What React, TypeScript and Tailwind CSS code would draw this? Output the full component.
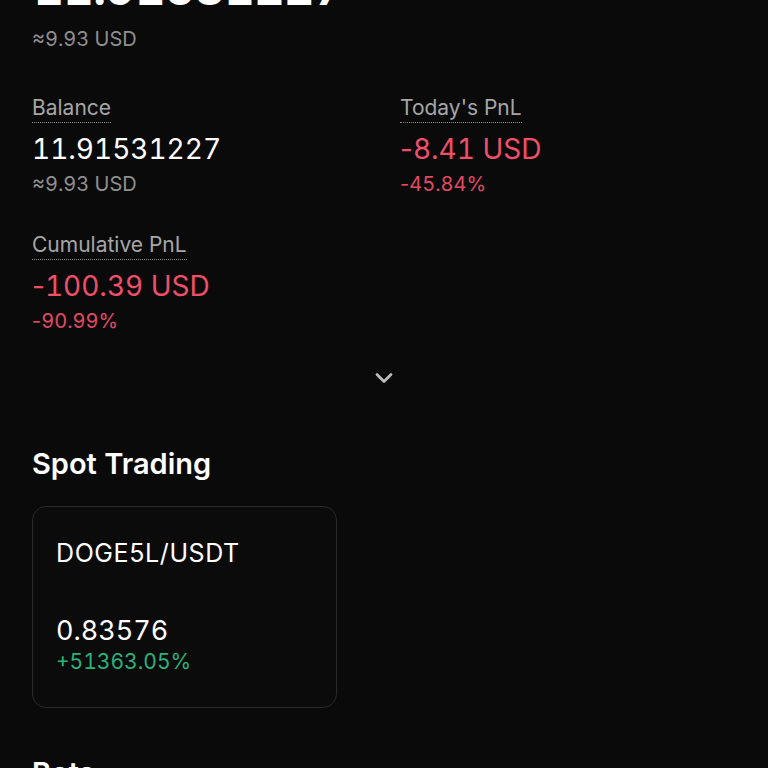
import { ChevronDown } from "lucide-react";

type Stat = {
  label: string;
  value: string;
  sub: string;
  tone: "plain" | "loss";
};

const stats: Stat[] = [
  { label: "Balance", value: "11.91531227", sub: "≈9.93 USD", tone: "plain" },
  { label: "Today's PnL", value: "-8.41 USD", sub: "-45.84%", tone: "loss" },
  { label: "Cumulative PnL", value: "-100.39 USD", sub: "-90.99%", tone: "loss" },
];

// tabular digits, but keep the minus sign proportional so it doesn't get padded out
function Num({ text }: { text: string }) {
  if (text.startsWith("-")) {
    return (
      <>
        <span className="normal-nums">-</span>
        {text.slice(1)}
      </>
    );
  }
  return <>{text}</>;
}

function StatBlock({ stat }: { stat: Stat }) {
  const loss = stat.tone === "loss";
  return (
    <div className="flex flex-col items-start">
      <span className="inline-block border-b border-dotted border-[#8a8a8a] text-[21px] leading-[28px] text-[#a6a6a6]">
        {stat.label}
      </span>
      <span
        className={
          "mt-[10px] text-[28px] leading-[32px] tabular-nums " +
          (loss ? "text-[#ef4f68]" : "text-white")
        }
      >
        <Num text={stat.value} />
      </span>
      <span
        className={
          "mt-[6px] text-[20px] leading-[26px] tabular-nums " +
          (loss ? "text-[#e24a62]" : "text-[#8f8f8f]")
        }
      >
        <Num text={stat.sub} />
      </span>
    </div>
  );
}

export default function App() {
  return (
    <div
      className="h-[768px] w-[768px] overflow-hidden bg-[#0a0a0a] px-8"
      style={{ fontFamily: "Inter, 'Noto Sans', sans-serif" }}
    >
      {/* total asset header, scrolled partly off screen */}
      <div className="-mt-[35px] pl-[2px] text-[46px] font-bold leading-[46px] tabular-nums text-white">11.91531227</div>
      <div className="mt-[14px] text-[20px] leading-[28px] tabular-nums text-[#8f8f8f]">≈9.93 USD</div>

      <div className="mt-[41px] grid grid-cols-2 gap-x-8 gap-y-[34px]">
        {stats.map((s) => (
          <StatBlock key={s.label} stat={s} />
        ))}
      </div>

      <div className="mt-[30px] flex justify-center">
        <ChevronDown className="h-[28px] w-[28px] text-[#bdbdbd]" strokeWidth={2.4} />
      </div>

      <h2 className="mt-[54px] text-[29px] font-semibold leading-[36px] text-white">Spot Trading</h2>

      <div className="mt-[24px] w-[305px] rounded-[14px] border border-[#2a2a2a] bg-[#0b0b0b] px-[23px] pb-[32px] pt-[30px]">
        <div className="text-[25px] leading-[32px] tracking-[0.6px] text-white">DOGE5L/USDT</div>
        <div className="mt-[45px] text-[27px] leading-[34px] tabular-nums text-white">0.83576</div>
        <div className="mt-[1px] text-[21px] leading-[26px] tabular-nums text-[#2ab27b]">+51363.05%</div>
      </div>

      <h2 className="mt-[47px] text-[29px] font-semibold leading-[36px] text-white">Bots</h2>
    </div>
  );
}
